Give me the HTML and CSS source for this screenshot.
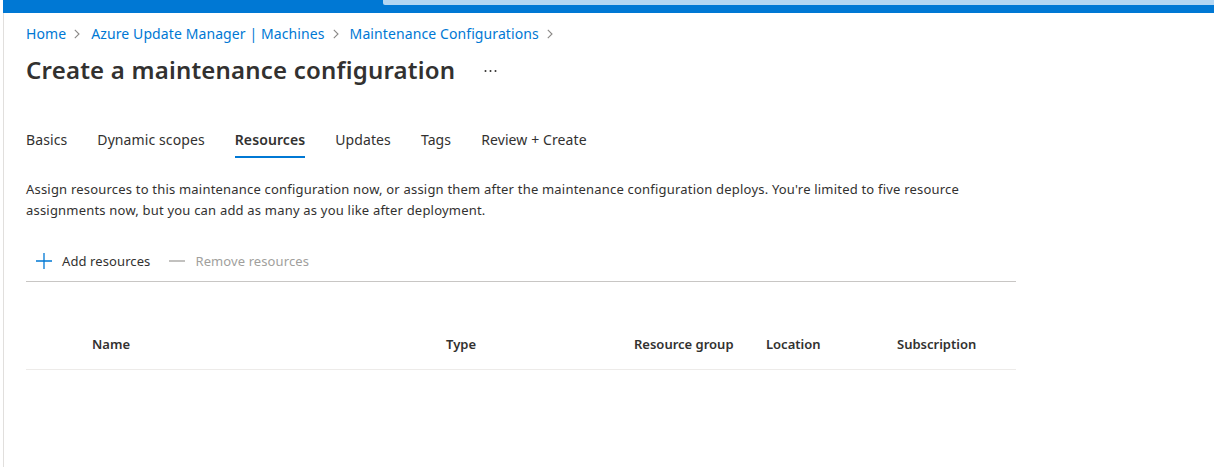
FILE: index.html
```html
<!DOCTYPE html>
<html>
<head>
<meta charset="utf-8">
<link rel="stylesheet" href="styles.css">
</head>
<body>
<div class="topbar"><div class="search"></div></div>
<div class="page">
  <nav class="crumbs">
    <a>Home</a><svg class="chev" width="6" height="10" viewBox="0 0 6 10"><path d="M0.8 0.8L5 5L0.8 9.2" stroke="#8a8886" stroke-width="1.1" fill="none"/></svg>
    <a>Azure Update Manager | Machines</a><svg class="chev" width="6" height="10" viewBox="0 0 6 10"><path d="M0.8 0.8L5 5L0.8 9.2" stroke="#8a8886" stroke-width="1.1" fill="none"/></svg>
    <a>Maintenance Configurations</a><svg class="chev" width="6" height="10" viewBox="0 0 6 10"><path d="M0.8 0.8L5 5L0.8 9.2" stroke="#8a8886" stroke-width="1.1" fill="none"/></svg>
  </nav>
  <div class="titlerow">
    <h1>Create a maintenance configuration</h1>
    <svg class="more" width="14" height="4" viewBox="0 0 14 4"><circle cx="1.5" cy="2" r="1" fill="#323130"/><circle cx="6.5" cy="2" r="1" fill="#323130"/><circle cx="11.5" cy="2" r="1" fill="#323130"/></svg>
  </div>
  <div class="tabs">
    <span class="tab">Basics</span>
    <span class="tab">Dynamic scopes</span>
    <span class="tab active">Resources</span>
    <span class="tab">Updates</span>
    <span class="tab">Tags</span>
    <span class="tab">Review + Create</span>
  </div>
  <p class="desc">Assign resources to this maintenance configuration now, or assign them after the maintenance configuration deploys. You're limited to five resource assignments now, but you can add as many as you like after deployment.</p>
  <div class="toolbar">
    <span class="btn"><svg width="18" height="18" viewBox="0 0 18 18"><path d="M9 1v16M1 9h16" stroke="#0078d4" stroke-width="1.3" fill="none"/></svg>Add resources</span>
    <span class="btn disabled"><svg width="18" height="18" viewBox="0 0 18 18"><path d="M1 9h16" stroke="#a19f9d" stroke-width="1.3" fill="none"/></svg>Remove resources</span>
  </div>
  <div class="table">
    <div class="thead">
      <span></span>
      <span>Name</span>
      <span>Type</span>
      <span>Resource group</span>
      <span>Location</span>
      <span>Subscription</span>
    </div>
  </div>
</div>
</body>
</html>
```

FILE: styles.css
```css
html, body { margin: 0; padding: 0; background: #fff; }
body {
  font-family: "Noto Sans", "Open Sans", sans-serif;
  color: #323130;
  height: 467px;
  overflow: hidden;
}
.topbar {
  margin-left: 3px;
  height: 13px;
  background: #0078d4;
  position: relative;
}
.search {
  position: absolute;
  left: 380px;
  right: 0;
  top: 0;
  height: 5px;
  background: #b3d6f2;
  border-bottom-left-radius: 2px;
}
.page {
  margin-left: 3px;
  border-left: 1px solid #e1dfdd;
  padding-left: 22px;
  height: 454px;
}
.crumbs {
  display: flex;
  align-items: center;
  padding-top: 10px;
  height: 21px;
  font-size: 14px;
  line-height: 21px;
}
.crumbs a { color: #0078d4; letter-spacing: 0.1px; }
.chev { margin: 1px 11px 0 8px; }
.titlerow {
  display: flex;
  align-items: center;
  margin-top: 7px;
  height: 38px;
}
h1 {
  margin: 0;
  font-size: 24px;
  font-weight: 600;
  line-height: 32px;
  color: #323130;
  letter-spacing: 0.2px;
}
.more { margin-left: 29px; margin-top: 2px; }
.tabs {
  display: flex;
  gap: 30px;
  margin-top: 40px;
  height: 34px;
  font-size: 14px;
}
.tab {
  line-height: 22px;
  height: 34px;
  box-sizing: border-box;
  position: relative;
  letter-spacing: 0.1px;
}
.tab.active { font-weight: 600; letter-spacing: 0.1px; }
.tab.active::after {
  content: "";
  position: absolute;
  left: 0; right: 0;
  top: 27px;
  height: 2px;
  background: #0078d4;
}
.desc {
  margin: 16px 0 0;
  width: 990px;
  font-size: 13px;
  line-height: 21px;
  letter-spacing: 0.2px;
}
.toolbar {
  display: flex;
  gap: 18px;
  width: 990px;
  margin-top: 27px;
  height: 34px;
  border-bottom: 1px solid #c8c6c4;
  box-sizing: border-box;
  padding-left: 9px;
  font-size: 13px;
  align-items: flex-start;
  padding-top: 4px;
}
.btn { display: flex; align-items: center; gap: 9px; line-height: 18px; letter-spacing: 0.1px; }
.btn.disabled { color: #a19f9d; }
.table { width: 990px; margin-top: 46px; }
.thead {
  display: grid;
  grid-template-columns: 66px 354px 188px 132px 131px 1fr;
  height: 42px;
  padding-top: 7px;
  border-bottom: 1px solid #edebe9;
  font-size: 13px;
  font-weight: 600;
  align-items: start;
  line-height: 18px;
  box-sizing: border-box;
}
```
